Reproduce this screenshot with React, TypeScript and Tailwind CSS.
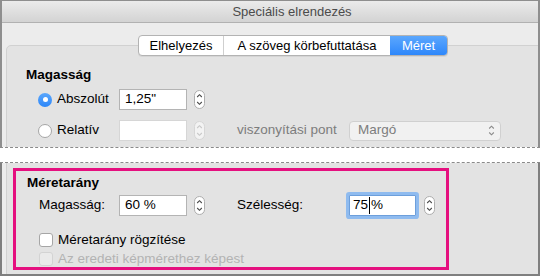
import React from "react";

const font = "font-['Liberation_Sans',Arial,sans-serif]";

function Stepper({ disabled = false }: { disabled?: boolean }) {
  return (
    <div
      className={`flex h-[19px] w-[11px] shrink-0 items-center justify-center rounded-full border ${
        disabled ? "border-[#d6d6d6] bg-[#f3f3f3]" : "border-[#aeaeae] bg-white"
      }`}
    >
      <svg width="7" height="15" viewBox="0 0 7 15" fill="none" stroke={disabled ? "#c8c8c8" : "#4a4a4a"} strokeWidth="1.1">
        <path d="M1.2 5 L3.5 2.7 L5.8 5" />
        <path d="M1.2 10 L3.5 12.3 L5.8 10" />
      </svg>
    </div>
  );
}

function Radio({ checked = false }: { checked?: boolean }) {
  if (checked) {
    return (
      <div className="flex h-[14px] w-[14px] shrink-0 items-center justify-center rounded-full bg-gradient-to-b from-[#5aa7fc] to-[#2b86f8]">
        <div className="h-[5px] w-[5px] rounded-full bg-white" />
      </div>
    );
  }
  return <div className="h-[14px] w-[14px] shrink-0 rounded-full border border-[#a6a6a6] bg-white" />;
}

function Checkbox({ disabled = false }: { disabled?: boolean }) {
  return (
    <div
      className={`h-[14px] w-[14px] shrink-0 rounded-[3px] border ${
        disabled ? "border-[#d3d3d3] bg-[#eaeaea]" : "border-[#a6a6a6] bg-white"
      }`}
    />
  );
}

function Field({ value, disabled = false }: { value?: string; disabled?: boolean }) {
  return (
    <div
      className={`flex h-[21px] w-[68px] shrink-0 items-center border pl-[5px] text-[13.5px] text-black ${
        disabled ? "border-[#d6d6d6] bg-white" : "border-[#b4b4b4] bg-white"
      }`}
    >
      {value}
    </div>
  );
}

export default function App() {
  return (
    <div className={`h-[276px] w-[540px] overflow-hidden bg-white ${font}`}>
      {/* upper part of the window */}
      <div className="h-[147px] overflow-hidden border-x-2 border-t border-[#8e8e8e] bg-[#ececec]">
        <div className="flex h-[22px] items-center justify-center border-b border-[#b1b1b1] bg-gradient-to-b from-[#ebebeb] to-[#d3d3d3] pl-[44px] text-[13px] text-[#4b4b4b]">
          Speciális elrendezés
        </div>

        <div className="relative z-10 ml-[136px] mt-[12px] flex h-[21px] w-[310px] overflow-hidden rounded-[4px] border border-[#b3b3b3] bg-white text-[13px] text-black shadow-[0_1px_0_rgba(0,0,0,0.06)]">
          <div className="flex w-[85px] items-center justify-center border-r border-[#cfcfcf]">Elhelyezés</div>
          <div className="flex w-[166px] items-center justify-center">A szöveg körbefuttatása</div>
          <div className="flex flex-1 items-center justify-center bg-gradient-to-b from-[#5ba7fd] to-[#2d87fb] text-white">
            Méret
          </div>
        </div>

        <div className="-mt-[11px] ml-[4px] h-[200px] w-[600px] rounded-[5px] border border-[#d1d1d1] bg-[#e3e3e3] pl-[19px] pt-[21px]">
          <div className="text-[13.5px] font-bold leading-[16px] text-black">Magasság</div>

          <div className="ml-[12px] mt-[6px] flex h-[21px] items-center">
            <Radio checked />
            <span className="ml-[5px] w-[62px] text-[13.5px] text-black">Abszolút</span>
            <Field value={'1,25"'} />
            <div className="ml-[7px]">
              <Stepper />
            </div>
          </div>

          <div className="ml-[12px] mt-[10px] flex h-[21px] items-center">
            <Radio />
            <span className="ml-[5px] w-[62px] text-[13.5px] text-black">Relatív</span>
            <Field disabled />
            <div className="ml-[7px]">
              <Stepper disabled />
            </div>
            <span className="ml-[32px] w-[112px] text-[13.5px] text-[#7d7d7d]">viszonyítási pont</span>
            <div className="flex h-[20px] w-[152px] items-center justify-between rounded-[4px] border border-[#d0d0d0] bg-[#f1f1f1] pl-[8px] pr-[5px] text-[13.5px] text-[#7d7d7d]">
              <span>Margó</span>
              <svg width="7" height="13" viewBox="0 0 7 13" fill="none" stroke="#8a8a8a" strokeWidth="1.1">
                <path d="M1.2 4.5 L3.5 2.2 L5.8 4.5" />
                <path d="M1.2 8.5 L3.5 10.8 L5.8 8.5" />
              </svg>
            </div>
          </div>
        </div>
      </div>

      {/* cut between the two parts */}
      <div className="h-[16px] border-y border-dashed border-[#8a8a8a] bg-white" />

      {/* lower part of the window */}
      <div className="h-[113px] border-x-2 border-b-2 border-[#7f7f7f] bg-[#ececec]">
        <div className="ml-[4px] h-full border-l border-[#d1d1d1] bg-[#e3e3e3] pl-[6px] pt-[5px]">
          <div className="h-[102px] w-[436px] border-[3px] border-[#e5107f] pl-[11px] pt-[4px]">
            <div className="text-[13.5px] font-bold leading-[16px] text-black">Méretarány</div>

            <div className="ml-[12px] mt-[4px] flex h-[21px] items-center">
              <span className="w-[80px] text-[13.5px] text-black">Magasság:</span>
              <Field value="60 %" />
              <div className="ml-[7px]">
                <Stepper />
              </div>
              <span className="ml-[32px] w-[112px] text-[13.5px] text-black">Szélesség:</span>
              <div className="flex h-[21px] w-[67px] items-center rounded-[1px] border border-[#6d9fdb] bg-white pl-[3px] text-[13.5px] text-black shadow-[0_0_0_3px_#8fbbef]">
                75
                <span className="mx-[1px] h-[17px] w-px bg-black" />
                %
              </div>
              <div className="ml-[8px]">
                <Stepper />
              </div>
            </div>

            <div className="ml-[12px] mt-[16px] flex h-[16px] items-center">
              <Checkbox />
              <span className="ml-[5px] text-[13.5px] text-black">Méretarány rögzítése</span>
            </div>
            <div className="ml-[12px] mt-[3px] flex h-[16px] items-center">
              <Checkbox disabled />
              <span className="ml-[5px] text-[13.5px] text-[#b3b3b3]">Az eredeti képmérethez képest</span>
            </div>
          </div>
        </div>
      </div>
    </div>
  );
}
